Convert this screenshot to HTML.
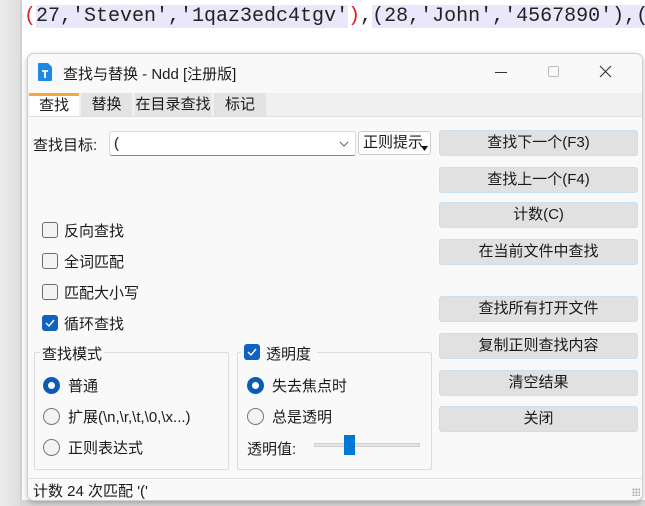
<!DOCTYPE html>
<html><head><meta charset="utf-8"><style>
*{margin:0;padding:0;box-sizing:border-box}
body{width:645px;height:506px;overflow:hidden;background:#fff;font-family:"Liberation Sans","Noto Sans CJK SC",sans-serif;font-size:15px;color:#1a1a1a;position:relative;white-space:nowrap}
.a{position:absolute}
.code{left:24px;top:5px;font-family:"Liberation Mono","DejaVu Sans Mono",monospace;font-size:20px;color:#222;white-space:pre}
.hl{background:#e8e8fa}
.win{left:27px;top:53px;width:616px;height:448px;background:#f9f9f9;border:1px solid #cfcfcf;border-radius:7px;overflow:hidden;box-shadow:0 2px 6px rgba(0,0,0,.25)}
.btn{left:411px;width:199px;height:26px;background:#e1e1e1;border:1px solid #c9dff2;border-radius:3px;text-align:center;line-height:24px}
.cb{width:16px;height:16px;border:1px solid #6e6e6e;border-radius:3px;background:#f3f3f3}
.cbk{width:16px;height:16px;border-radius:3px;background:#0f62c0}
.rd{width:17px;height:17px;border-radius:50%;border:1px solid #777;background:#f3f3f3}
.rdo{width:17px;height:17px;border-radius:50%;background:#fff;border:5px solid #0a5cb8}
.gb{border:1px solid #dcdcdc;border-radius:2px}
.gt{background:#f9f9f9;padding:0 2px}
.tab{top:39px;height:23px;background:#e3e3e3;text-align:center;line-height:23px}
</style></head><body>
<div class="a" style="left:0;top:0;width:20px;height:506px;background:linear-gradient(90deg,#ececec,#dedede)"></div>
<div class="a" style="left:20px;top:0;width:2px;height:506px;background:#d0d0d0"></div>
<div class="a code"><span style="color:#e02020">(</span><span class="hl">27,'Steven','1qaz3edc4tgv'</span><span style="color:#e02020">)</span>,<span class="hl">(28,'John','4567890'),(</span></div>
<div class="a" style="left:20px;top:500px;width:625px;height:6px;background:#d8d8d8"></div>
<div class="a win">
 <svg class="a" style="left:10px;top:9px" width="14" height="18" viewBox="0 0 14 18"><path d="M0 1Q0 0 1 0H10L14 4V17Q14 18 13 18H1Q0 18 0 17Z" fill="#1e88e5"/><path d="M4 8H10M7 8V15" stroke="#fff" stroke-width="1.8"/></svg>
 <div class="a" style="left:35px;top:9px">查找与替换 - Ndd [注册版]</div>
 <div class="a" style="left:467px;top:18px;width:12px;height:1px;background:#333"></div>
 <div class="a" style="left:520px;top:12px;width:11px;height:11px;border:1px solid #bbb;border-radius:2px"></div>
 <svg class="a" style="left:571px;top:11px" width="13" height="13"><path d="M1 1L12 12M12 1L1 12" stroke="#333" stroke-width="1.1"/></svg>
 <div class="a" style="left:0;top:39px;width:616px;height:23px;background:#f0f0f0"></div>
 <div class="a" style="left:1px;top:39px;width:50px;height:24px;background:#fff;border-top:3px solid #f4a73a;text-align:center;line-height:20px">查找</div>
 <div class="a tab" style="left:53px;width:51px">替换</div>
 <div class="a tab" style="left:107px;width:76px">在目录查找</div>
 <div class="a tab" style="left:186px;width:52px">标记</div>
 <div class="a" style="left:0;top:62px;width:616px;height:1px;background:#e0e0e0"></div>
 <div class="a" style="left:5px;top:80px">查找目标:</div>
 <div class="a" style="left:81px;top:77px;width:247px;height:25px;background:#fff;border:1px solid #d8d8d8;border-bottom:1px solid #888;border-radius:3px;padding-left:4px;line-height:23px">(</div>
 <svg class="a" style="left:311px;top:87px" width="10" height="6"><path d="M1 1L5 5L9 1" stroke="#666" fill="none"/></svg>
 <div class="a" style="left:330px;top:77px;width:73px;height:24px;background:#fdfdfd;border:1px solid #ccc;border-radius:3px;padding-left:4px;line-height:22px;overflow:hidden">正则提示</div>
 <svg class="a" style="left:393px;top:92px" width="8" height="6"><path d="M0 0H7L3.5 5Z" fill="#111"/></svg>
 <div class="a btn" style="top:76px">查找下一个(F3)</div>
 <div class="a btn" style="top:113px">查找上一个(F4)</div>
 <div class="a btn" style="top:148px">计数(C)</div>
 <div class="a btn" style="top:185px">在当前文件中查找</div>
 <div class="a btn" style="top:242px">查找所有打开文件</div>
 <div class="a btn" style="top:279px">复制正则查找内容</div>
 <div class="a btn" style="top:316px">清空结果</div>
 <div class="a btn" style="top:352px">关闭</div>
 <div class="a cb" style="left:14px;top:168px"></div><div class="a" style="left:36px;top:166px">反向查找</div>
 <div class="a cb" style="left:14px;top:199px"></div><div class="a" style="left:36px;top:197px">全词匹配</div>
 <div class="a cb" style="left:14px;top:230px"></div><div class="a" style="left:36px;top:228px">匹配大小写</div>
 <div class="a cbk" style="left:14px;top:261px"><svg width="16" height="16"><path d="M4 8L7 11L12 5" stroke="#fff" stroke-width="1.4" fill="none"/></svg></div><div class="a" style="left:36px;top:259px">循环查找</div>
 <div class="a gb" style="left:6px;top:298px;width:195px;height:118px"></div>
 <div class="a gt" style="left:12px;top:289px">查找模式</div>
 <div class="a rdo" style="left:15px;top:323px"></div><div class="a" style="left:40px;top:321px">普通</div>
 <div class="a rd" style="left:15px;top:354px"></div><div class="a" style="left:40px;top:352px">扩展(\n,\r,\t,\0,\x...)</div>
 <div class="a rd" style="left:15px;top:385px"></div><div class="a" style="left:40px;top:383px">正则表达式</div>
 <div class="a gb" style="left:209px;top:298px;width:195px;height:118px"></div>
 <div class="a" style="left:213px;top:290px;width:76px;height:20px;background:#f9f9f9"></div>
 <div class="a cbk" style="left:216px;top:290px"><svg width="16" height="16"><path d="M4 8L7 11L12 5" stroke="#fff" stroke-width="1.4" fill="none"/></svg></div>
 <div class="a" style="left:238px;top:289px">透明度</div>
 <div class="a rdo" style="left:219px;top:323px"></div><div class="a" style="left:244px;top:321px">失去焦点时</div>
 <div class="a rd" style="left:219px;top:354px"></div><div class="a" style="left:244px;top:352px">总是透明</div>
 <div class="a" style="left:219px;top:384px">透明值:</div>
 <div class="a" style="left:286px;top:389px;width:106px;height:4px;background:#e4e4e4;border:1px solid #d0d0d0"></div>
 <div class="a" style="left:316px;top:381px;width:11px;height:20px;background:#0078d4"></div>
 <div class="a" style="left:0;top:424px;width:616px;height:1px;background:#e2e2e2"></div>
 <div class="a" style="left:5px;top:426px">计数 24 次匹配 '('</div>
 <div class="a" style="left:604px;top:434px;width:8px;height:8px;background:radial-gradient(circle,#aaa 1px,transparent 1.2px) 0 0/3px 3px"></div>
</div>
</body></html>
